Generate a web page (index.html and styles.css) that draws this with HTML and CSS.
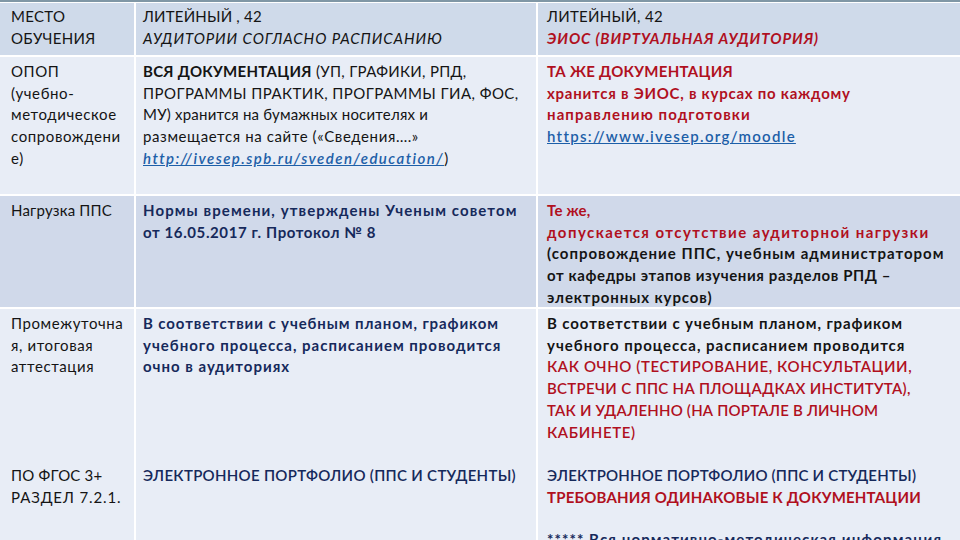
FILE: index.html
```html
<!DOCTYPE html>
<html lang="ru">
<head>
<meta charset="utf-8">
<link rel="stylesheet" href="styles.css">
</head>
<body>
<div class="topline"></div>
<div class="grid">
  <div class="cell hdr c1">
    <div class="ln s3">МЕСТО</div>
    <div class="ln s3">ОБУЧЕНИЯ</div>
  </div>
  <div class="cell hdr c2">
    <div class="ln s2">ЛИТЕЙНЫЙ , 42</div>
    <div class="ln s9"><i>АУДИТОРИИ СОГЛАСНО РАСПИСАНИЮ</i></div>
  </div>
  <div class="cell hdr c3">
    <div class="ln s3">ЛИТЕЙНЫЙ, 42</div>
    <div class="ln s9 red"><i>ЭИОС (ВИРТУАЛЬНАЯ АУДИТОРИЯ)</i></div>
  </div>

  <div class="cell lt c1">
    <div class="ln s6">ОПОП</div>
    <div class="ln s6">(учебно-</div>
    <div class="ln s6">методическое</div>
    <div class="ln s6">сопровождени</div>
    <div class="ln s6">е)</div>
  </div>
  <div class="cell lt c2">
    <div class="ln s3"><b>ВСЯ ДОКУМЕНТАЦИЯ</b> (УП, ГРАФИКИ, РПД,</div>
    <div class="ln s4">ПРОГРАММЫ ПРАКТИК, ПРОГРАММЫ ГИА, ФОС,</div>
    <div class="ln s2">МУ) хранится на бумажных носителях и</div>
    <div class="ln s6">размещается на сайте («Сведения….»</div>
    <div class="ln"><a class="link s15"><i>http://ivesep.spb.ru/sveden/education/</i></a>)</div>
  </div>
  <div class="cell lt c3">
    <div class="ln s3 red">ТА ЖЕ ДОКУМЕНТАЦИЯ</div>
    <div class="ln s7 red">хранится в ЭИОС, в курсах по каждому</div>
    <div class="ln s11 red">направлению подготовки</div>
    <div class="ln"><a class="link s13">https://www.ivesep.org/moodle</a></div>
  </div>

  <div class="cell dk c1">
    <div class="ln s2">Нагрузка ППС</div>
  </div>
  <div class="cell dk c2 navy">
    <div class="ln s11">Нормы времени, утверждены Ученым советом</div>
    <div class="ln s6">от 16.05.2017 г. Протокол № 8</div>
  </div>
  <div class="cell dk c3">
    <div class="ln s2 red">Те же,</div>
    <div class="ln s15 red">допускается отсутствие аудиторной нагрузки</div>
    <div class="ln s10 blk">(сопровождение ППС, учебным администратором</div>
    <div class="ln s6 blk">от кафедры этапов изучения разделов РПД –</div>
    <div class="ln s9 blk">электронных курсов)</div>
  </div>

  <div class="cell lt c1">
    <div class="ln s6">Промежуточна</div>
    <div class="ln s6">я, итоговая</div>
    <div class="ln s6">аттестация</div>
  </div>
  <div class="cell lt c2 navy">
    <div class="ln s9">В соответствии с учебным планом, графиком</div>
    <div class="ln s10">учебного процесса, расписанием проводится</div>
    <div class="ln s10">очно в аудиториях</div>
  </div>
  <div class="cell lt c3">
    <div class="ln s9 blk">В соответствии с учебным планом, графиком</div>
    <div class="ln s10 blk">учебного процесса, расписанием проводится</div>
    <div class="ln s6 redn">КАК ОЧНО (ТЕСТИРОВАНИЕ, КОНСУЛЬТАЦИИ,</div>
    <div class="ln s3 redn">ВСТРЕЧИ С ППС НА ПЛОЩАДКАХ ИНСТИТУТА),</div>
    <div class="ln s2 redn">ТАК И УДАЛЕННО (НА ПОРТАЛЕ В ЛИЧНОМ</div>
    <div class="ln s6 redn">КАБИНЕТЕ)</div>
  </div>

  <div class="cell lt2 c1">
    <div class="ln s2">ПО ФГОС 3+</div>
    <div class="ln s9">РАЗДЕЛ 7.2.1.</div>
  </div>
  <div class="cell lt2 c2">
    <div class="ln s3 navyn">ЭЛЕКТРОННОЕ ПОРТФОЛИО (ППС И СТУДЕНТЫ)</div>
  </div>
  <div class="cell lt2 c3">
    <div class="ln s2 navyn">ЭЛЕКТРОННОЕ ПОРТФОЛИО (ППС И СТУДЕНТЫ)</div>
    <div class="ln s2 red">ТРЕБОВАНИЯ ОДИНАКОВЫЕ К ДОКУМЕНТАЦИИ</div>
    <div class="ln s11 navy note">***** Вся нормативно-методическая информация</div>
  </div>
</div>
</body>
</html>
```

FILE: styles.css
```css
html, body {
  margin: 0;
  padding: 0;
  background: #ffffff;
  overflow: hidden;
}
body {
  width: 960px;
  height: 540px;
  font-family: "Lato", "Open Sans", sans-serif;
  font-size: 15px;
  line-height: 21.7px;
  color: #141414;
}
.topline {
  height: 2px;
  background: #8097a6;
  margin-bottom: 1px;
}
.grid {
  display: grid;
  grid-template-columns: 134px 400px 1fr;
  grid-template-rows: 52px 137px 111px 146px 120px;
  column-gap: 2px;
  row-gap: 2px;
  background: #ffffff;
}
.cell {
  padding-top: 4px;
  min-width: 0;
}
.ln { white-space: nowrap; }
.c1 { padding-left: 11px; }
.c2 { padding-left: 7px; }
.c3 { padding-left: 9px; }
.hdr { background: #cfdaea; padding-top: 3px; }
.lt { background: #e8edf6; }
.dk { background: #d0d9ea; }
.lt2 { background: #e8edf6; margin-top: -2px; padding-top: 10px; }

.s2 { letter-spacing: 0.2px; }
.s3 { letter-spacing: 0.3px; }
.s4 { letter-spacing: 0.45px; }
.s6 { letter-spacing: 0.6px; }
.s7 { letter-spacing: 0.75px; }
.s9 { letter-spacing: 0.9px; }
.s10 { letter-spacing: 1px; }
.s11 { letter-spacing: 1.1px; }
.s13 { letter-spacing: 1.3px; }
.s15 { letter-spacing: 1.45px; }

.red { color: #b0101e; font-weight: 700; }
.redn { color: #b0101e; font-weight: 600; }
.navy { color: #16295b; font-weight: 700; }
.navyn { color: #16295b; font-weight: 600; }
.blk { color: #141414; font-weight: 700; }
.note { margin-top: 21px; }
.link {
  color: #1d5fa8;
  text-decoration: underline;
  font-weight: 600;
}
b { font-weight: 700; }
```
